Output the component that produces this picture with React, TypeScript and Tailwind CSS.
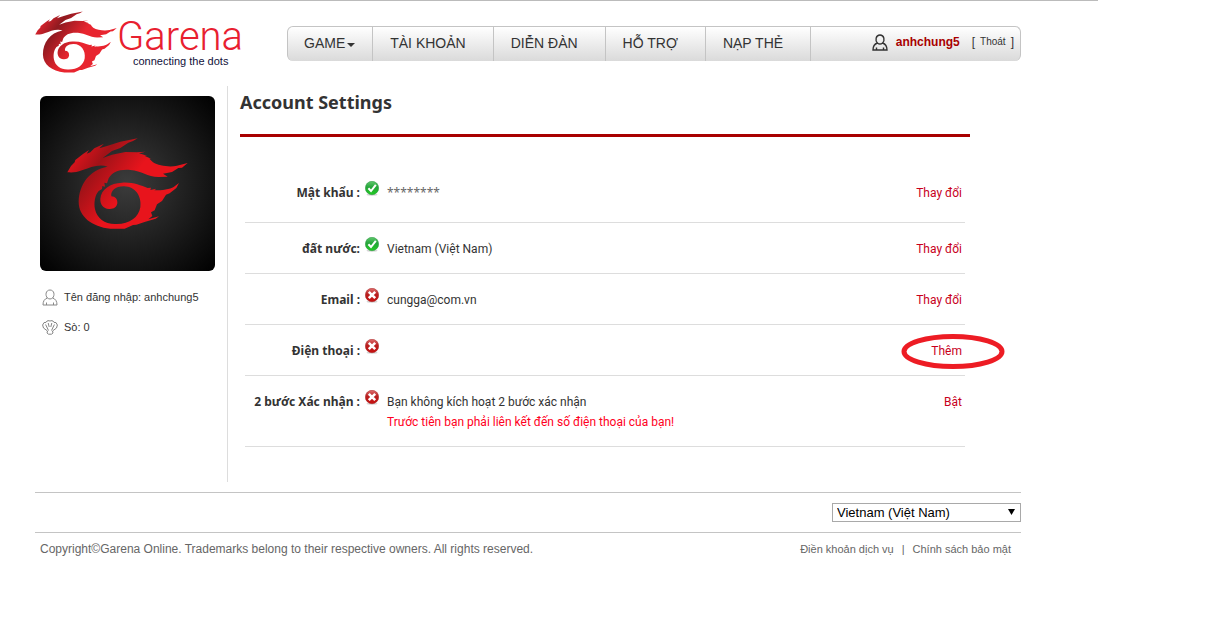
// ======================================================
// ACCOUNT SETTINGS PAGE
// ======================================================

import { useId } from "react"

const NAV_ITEMS = ["TÀI KHOẢN", "DIỄN ĐÀN", "HỖ TRỢ", "NẠP THẺ"]

type Setting = {
  label: string
  verified: boolean
  value: string
  action: string
  warning?: string
  masked?: boolean
  circled?: boolean
}

const SETTINGS: Setting[] = [
  { label: "Mật khẩu :", verified: true, value: "********", action: "Thay đổi", masked: true },
  { label: "đất nước:", verified: true, value: "Vietnam (Việt Nam)", action: "Thay đổi" },
  { label: "Email :", verified: false, value: "cungga@com.vn", action: "Thay đổi" },
  { label: "Điện thoại :", verified: false, value: "", action: "Thêm", circled: true },
  {
    label: "2 bước Xác nhận :",
    verified: false,
    value: "Bạn không kích hoạt 2 bước xác nhận",
    warning: "Trước tiên bạn phải liên kết đến số điện thoại của bạn!",
    action: "Bật",
  },
]

// ======================================================
// ICONS
// ======================================================

const Dragon = ({ className, dark, bright }: { className: string; dark: string; bright: string }) => {
  const id = useId()
  return (
    <svg viewBox="110 154 363 273" className={className} aria-hidden="true">
      <defs>
        <linearGradient id={id} gradientUnits="userSpaceOnUse" x1="130" y1="190" x2="330" y2="330">
          <stop offset="0" stopColor={bright} />
          <stop offset="0.35" stopColor={dark} />
          <stop offset="0.8" stopColor={bright} />
        </linearGradient>
      </defs>
      <path
        fill={`url(#${id})`}
        d="M111 257 L122 238 L133 227 L135 220 L158 202 L176 190 L169 201 L180 197 L192 185 L221 171 L207 185 L230 178 L270 165 L322 155 L308 163 L294 168 L270 184 L245 193 L217 214 L245 204 L285 196 L320 197 L346 195 L326 200 L350 207 L342 207 L362 216 L357 216 L368 227 C385 238 420 242 440 237 L472 229 L455 243 L444 244 L425 256 L398 261 L412 270 L385 271 C350 270 335 253 300 250 C265 247 245 258 235 275 L230 290 L222 288 L224 300 L216 298 L215 307 L205 313 C194 325 190 348 194 368 C200 395 222 412 254 412 C296 414 325 393 330 362 C335 328 314 300 282 299 C256 298 240 313 243 329 C255 329 262 338 261 350 C259 362 249 368 236 367 C218 366 209 352 210 336 C212 308 240 289 275 288 C308 286 330 296 352 304 L362 303 L360 310 L378 306 L372 311 C395 311 420 308 430 301 L446 289 L438 304 L418 320 L407 324 L395 343 L380 353 L373 371 L362 377 L366 388 L354 398 L386 389 L376 396 L345 405 L318 414 L308 415 L283 426 L240 426 C185 420 145 390 145 345 C146 295 175 250 232 240 C205 231 180 243 155 251 C138 258 125 258 111 257 Z"
      />
    </svg>
  )
}

const StatusIcon = ({ verified }: { verified: boolean }) => {
  const id = useId()
  return (
    <svg viewBox="0 0 14 15" className="h-[15px] w-3.5 shrink-0" role="img" aria-label={verified ? "OK" : "Missing"}>
      <defs>
        <linearGradient id={id} x1="0" y1="0" x2="0" y2="1">
          <stop offset="0" stopColor={verified ? "#5fc86c" : "#e07070"} />
          <stop offset="0.45" stopColor={verified ? "#25a53a" : "#b81f1f"} />
          <stop offset="1" stopColor={verified ? "#22cc22" : "#c81010"} />
        </linearGradient>
      </defs>
      <ellipse cx="7" cy="13.6" rx="5.5" ry="1.2" fill="#d5d5d5" />
      <circle cx="7" cy="7" r="6.7" fill={`url(#${id})`} stroke={verified ? "#23923a" : "#a51c1c"} strokeWidth="0.5" />
      {verified ? (
        <path d="M3.4 7.2 L6 10 L10.8 3.8" fill="none" stroke="#fff" strokeWidth="2" />
      ) : (
        <path d="M3.8 3.8 L10.2 10.2 M10.2 3.8 L3.8 10.2" stroke="#fff" strokeWidth="2.6" />
      )}
    </svg>
  )
}

const UserIcon = ({ className }: { className: string }) => (
  <svg viewBox="0 0 16 17" className={className} fill="none" stroke="currentColor" aria-hidden="true">
    <path d="M5.4 9 C3 6.5 3.6 1 8 1 C12.4 1 13 6.5 10.6 9 C13.5 10 15 12 15 16 L1 16 C1 12 2.5 10 5.4 9 Z M5.4 9 C7 10.3 9 10.3 10.6 9 M4.5 13.5 V16 M11.5 13.5 V16" />
  </svg>
)

const ShellIcon = () => (
  <svg viewBox="0 0 16 15" className="h-[15px] w-4" fill="none" stroke="#777" strokeWidth="0.9" aria-hidden="true">
    <path d="M5.5 11 L1.5 8 L0.6 5 L2 2.6 L4 2.4 L5 1 L7 0.6 L8 1.2 L9 0.6 L11 1 L12 2.4 L14 2.6 L15.4 5 L14.5 8 L10.5 11 L11 13 L9.5 14.2 L6.5 14.2 L5 13 Z M3.6 4.5 L6.5 10.5 M6.2 3 L7.2 7 M9.8 3 L8.8 7 M12.4 4.5 L9.5 10.5" />
  </svg>
)

// ======================================================
// HEADER
// ======================================================

const Header = () => (
  <header className="flex justify-between pt-2.5">
    <a href="#" className="flex">
      <Dragon className="h-[62px] w-[82px]" dark="#8f1a20" bright="#e8252f" />
      <span className="flex flex-col pt-2">
        <span className="font-['Roboto',sans-serif] text-[40px] font-light leading-9 text-[#e8202f]">Garena</span>
        <span className="pl-4 text-[11px] leading-3 text-[#10103a]">connecting the dots</span>
      </span>
    </a>
    <nav className="mt-[15px] flex h-[35px] w-[734px] rounded-md border border-b-0 border-[#c4c4c4] bg-linear-to-b from-white to-[#dadada] text-sm text-[#333]">
      <button className="flex items-center gap-0.5 border-r border-[#c4c4c4] pb-0.5 pl-4 pr-[17px]">
        GAME
        <svg viewBox="0 0 8 4" className="mt-1 h-1 w-2" aria-hidden="true">
          <path d="M0 0 H8 L4 4 Z" fill="#333" />
        </svg>
      </button>
      {NAV_ITEMS.map((item) => (
        <a key={item} href="#" className="flex items-center border-r border-[#c4c4c4] pb-0.5 pl-[17px] pr-[27px]">
          {item}
        </a>
      ))}
      <div className="ml-auto flex items-center pb-1 pr-1.5 text-xs">
        <UserIcon className="mr-2 h-[17px] w-4 stroke-[1.4] text-[#333]" />
        <a href="#" className="font-bold text-[#a80000]">anhchung5</a>
        <span className="ml-3 flex items-center gap-[5px] text-xs">
          [<a href="#" className="text-[10px]">Thoát</a>]
        </span>
      </div>
    </nav>
  </header>
)

// ======================================================
// SIDEBAR
// ======================================================

const Sidebar = () => (
  <aside className="w-[193px] shrink-0 border-r border-[#ddd] pl-[5px] pt-2.5 text-[11px] text-[#333]">
    <div className="flex size-[175px] items-center justify-center rounded-md bg-[radial-gradient(circle,#3c3c3c,#000)]">
      <Dragon className="h-[91px] w-[121px]" dark="#a01218" bright="#e8141c" />
    </div>
    <p className="mt-[18px] flex items-center gap-1.5 pl-0.5">
      <UserIcon className="h-[17px] w-4 text-[#888]" />
      Tên đăng nhập: anhchung5
    </p>
    <p className="mt-[13px] flex items-center gap-1.5 pl-0.5">
      <ShellIcon />
      Sò: 0
    </p>
  </aside>
)

// ======================================================
// SETTINGS LIST
// ======================================================

const SettingRow = ({ label, verified, value, action, warning, masked, circled }: Setting) => (
  <li className="flex items-start border-b border-[#ddd] pb-3.5 pt-4 first:pb-[19px]">
    <span className="w-[115px] shrink-0 whitespace-nowrap text-right font-['Noto_Sans',sans-serif] font-bold">{label}</span>
    <span className="-mt-0.5 ml-[5px] mr-2">
      <StatusIcon verified={verified} />
    </span>
    <div className="flex-1">
      <p className={masked ? "font-['Noto_Sans',sans-serif] text-[#666]" : undefined}>{value}</p>
      {warning && <p className="text-[#ff0022]">{warning}</p>}
    </div>
    <span className="relative pr-[3px]">
      <a href="#" className="text-[#c8001c]">{action}</a>
      {circled && (
        <svg viewBox="0 0 104 36" className="pointer-events-none absolute -right-10 -top-[7px] h-9 w-[104px]" aria-hidden="true">
          <ellipse cx="52" cy="17.5" rx="49" ry="15" fill="none" stroke="#ed1c24" strokeWidth="5" />
        </svg>
      )}
    </span>
  </li>
)

const Settings = () => (
  <main className="flex-1 pl-3 pr-[51px] text-[#333]">
    <h1 className="border-b-3 border-[#a80000] pb-[19px] pt-1 font-['Noto_Sans',sans-serif] text-lg font-bold leading-[25px]">
      Account Settings
    </h1>
    <ul className="mx-[5px] mt-[30px] font-['Roboto',sans-serif] text-xs leading-5">
      {SETTINGS.map((setting) => (
        <SettingRow key={setting.label} {...setting} />
      ))}
    </ul>
  </main>
)

// ======================================================
// FOOTER
// ======================================================

const Footer = () => (
  <footer className="mt-2.5 border-t border-[#c4c4c4] text-[#666]">
    <div className="flex justify-end border-b border-[#c4c4c4] py-2.5">
      <div className="relative flex">
        <select
          aria-label="Country"
          className="h-[19px] w-[189px] appearance-none border border-[#a9a9a9] bg-white pl-1 text-[13px] leading-4 text-black"
        >
          <option>Vietnam (Việt Nam)</option>
        </select>
        <svg viewBox="0 0 7 6" className="pointer-events-none absolute right-1.5 top-1.5 h-1.5 w-[7px]" aria-hidden="true">
          <path d="M0 0 H7 L3.5 6 Z" fill="#000" />
        </svg>
      </div>
    </div>
    <div className="flex items-center justify-between pl-[5px] pr-2.5 pt-2 text-xs">
      <p>Copyright©Garena Online. Trademarks belong to their respective owners. All rights reserved.</p>
      <p className="flex gap-2 text-[11px]">
        <a href="#">Điền khoản dịch vụ</a>
        <span>|</span>
        <a href="#">Chính sách bảo mật</a>
      </p>
    </div>
  </footer>
)

export default function App() {
  return (
    <div className="max-w-[1098px] border-t border-[#bbb] bg-white pl-[35px] pr-[77px] font-['Liberation_Sans',Arial,sans-serif]">
      <Header />
      <div className="mt-[13px] flex">
        <Sidebar />
        <div className="flex flex-1 pb-[35px]">
          <Settings />
        </div>
      </div>
      <Footer />
    </div>
  )
}
